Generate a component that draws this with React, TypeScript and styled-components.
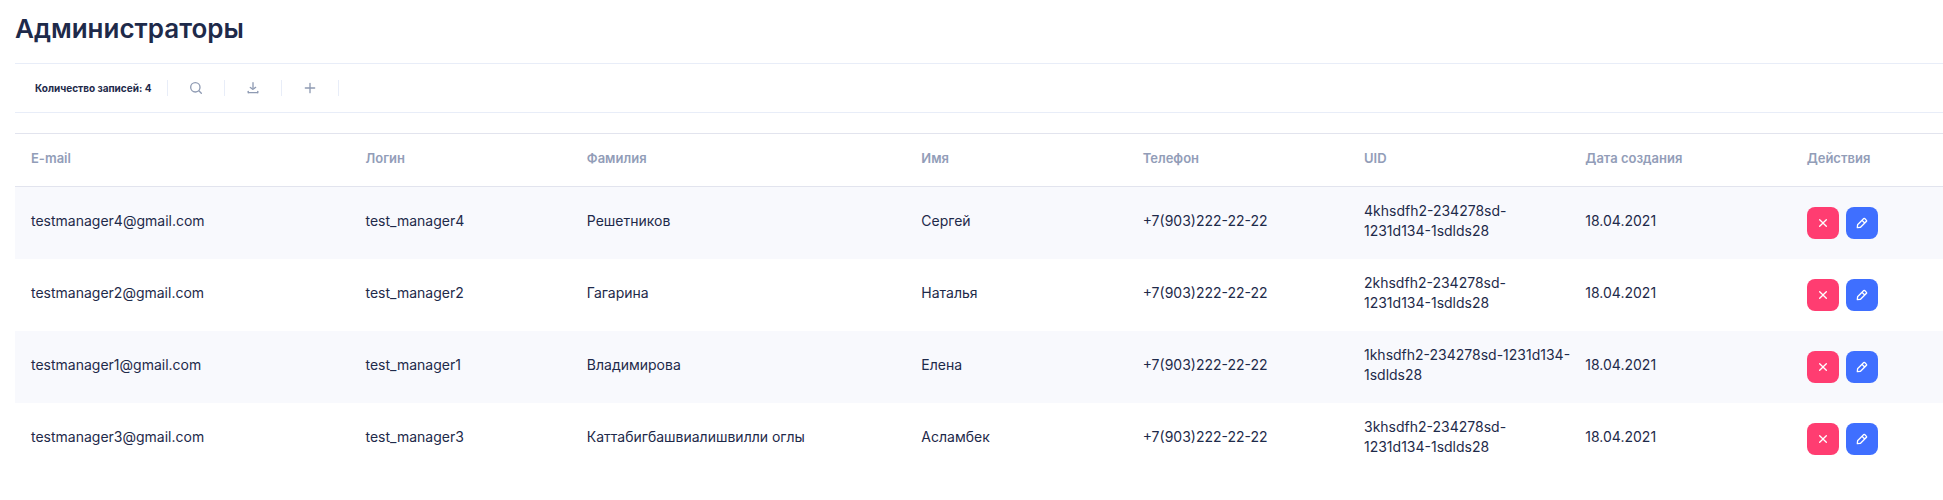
import React from "react";
import styled, { createGlobalStyle } from "styled-components";

const GlobalStyle = createGlobalStyle`
  * { box-sizing: border-box; }
  body {
    margin: 0;
    background: #ffffff;
    color: #1e2a4a;
    font-family: Inter, "Liberation Sans", sans-serif;
    font-size: 14px;
    line-height: 20px;
  }
`;

const Page = styled.main`
  padding: 12px 0 24px 15px;
`;

const Title = styled.h1`
  margin: 0;
  padding-bottom: 17px;
  font-size: 26px;
  line-height: 34px;
  font-weight: 600;
`;

const Toolbar = styled.div`
  display: flex;
  align-items: center;
  height: 50px;
  margin-bottom: 20px;
  padding-left: 20px;
  border-top: 1px solid #e8edf8;
  border-bottom: 1px solid #e8edf8;
`;

const Count = styled.span`
  width: 132px;
  font-size: 10px;
  line-height: 16px;
  font-weight: 700;
  white-space: nowrap;
`;

const ToolButton = styled.button`
  display: flex;
  align-items: center;
  justify-content: center;
  width: 57px;
  height: 16px;
  padding: 0;
  border: 0;
  border-right: 1px solid #e8edf8;
  background: none;
  color: #8f9bb3;
  cursor: pointer;

  &:first-of-type {
    width: 58px;
    border-left: 1px solid #e8edf8;
  }
`;

const Table = styled.table`
  width: 100%;
  table-layout: fixed;
  border-collapse: separate;
  border-spacing: 0;
  border-top: 1px solid #e2e4ee;
`;

const Column = styled.col<{ $share?: string }>`
  width: ${({ $share }) => $share ?? "auto"};
`;

const HeadCell = styled.th`
  padding: 14px 16px 18px;
  border-bottom: 1px solid #e2e4ee;
  color: #929db8;
  font-size: 13px;
  font-weight: 600;
  text-align: left;
`;

const Row = styled.tr`
  height: 72px;

  &:nth-child(odd) {
    background: #f8f9fd;
  }
`;

const Cell = styled.td`
  padding: 14px 16px 18px;
  vertical-align: middle;
`;

const UidCell = styled(Cell)`
  padding-right: 0;
`;

const UidPart = styled.span`
  white-space: nowrap;
`;

const ActionCell = styled(Cell)`
  padding: 20px 16px;
`;

const Actions = styled.div`
  display: flex;
  gap: 7px;
`;

const ActionButton = styled.button<{ $tone: "danger" | "primary" }>`
  display: flex;
  align-items: center;
  justify-content: center;
  width: 32px;
  height: 32px;
  padding: 0;
  border: 0;
  border-radius: 8px;
  background: ${({ $tone }) => ($tone === "danger" ? "#ff3d71" : "#3f6fff")};
  color: #ffffff;
  cursor: pointer;
`;

const Icon = styled.svg.attrs({ viewBox: "0 0 24 24", "aria-hidden": true })`
  display: block;
  width: 16px;
  height: 16px;
  fill: currentColor;
`;

const SearchIcon = () => (
  <Icon>
    <path d="M20.71 19.29l-3.4-3.39A7.92 7.92 0 0 0 19 11a8 8 0 1 0-8 8 7.92 7.92 0 0 0 4.9-1.69l3.39 3.4a1 1 0 0 0 1.42 0 1 1 0 0 0 0-1.42zM5 11a6 6 0 1 1 6 6 6 6 0 0 1-6-6z" />
  </Icon>
);

const DownloadIcon = () => (
  <Icon>
    <rect x="4" y="18" width="16" height="2" rx="1" />
    <rect x="4" y="16" width="2" height="4" rx="1" />
    <rect x="18" y="16" width="2" height="4" rx="1" />
    <path d="M12 15a1 1 0 0 1-.58-.18l-4-2.82a1 1 0 0 1-.24-1.39 1 1 0 0 1 1.4-.24L12 12.76l3.4-2.56a1 1 0 0 1 1.2 1.6l-4 3a1 1 0 0 1-.6.2z" />
    <path d="M12 13a1 1 0 0 1-1-1V4a1 1 0 0 1 2 0v8a1 1 0 0 1-1 1z" />
  </Icon>
);

const PlusIcon = () => (
  <Icon>
    <path d="M19 11h-6V5a1 1 0 0 0-2 0v6H5a1 1 0 0 0 0 2h6v6a1 1 0 0 0 2 0v-6h6a1 1 0 0 0 0-2z" />
  </Icon>
);

const CrossIcon = () => (
  <Icon>
    <path d="M13.41 12l4.3-4.29a1 1 0 1 0-1.42-1.42L12 10.59l-4.29-4.3a1 1 0 0 0-1.42 1.42l4.3 4.29-4.3 4.29a1 1 0 0 0 0 1.42 1 1 0 0 0 1.42 0l4.29-4.3 4.29 4.3a1 1 0 0 0 1.42 0 1 1 0 0 0 0-1.42z" />
  </Icon>
);

const PencilIcon = () => (
  <Icon>
    <path d="M19.4 7.34L16.66 4.6A2 2 0 0 0 14 4.53l-9 9a2 2 0 0 0-.57 1.21L4 18.91a1 1 0 0 0 .29.8A1 1 0 0 0 5 20h.09l4.17-.38a2 2 0 0 0 1.21-.57l9-9a1.92 1.92 0 0 0-.07-2.71zM9.08 17.62l-3 .28.27-3L12 9.32l2.7 2.7zM16 10.68L13.32 8l1.95-2L18 8.73z" />
  </Icon>
);

const columns: { label: string; share?: string }[] = [
  { label: "E-mail", share: "17.35%" },
  { label: "Логин", share: "11.48%" },
  { label: "Фамилия", share: "17.35%" },
  { label: "Имя", share: "11.48%" },
  { label: "Телефон", share: "11.48%" },
  { label: "UID", share: "11.48%" },
  { label: "Дата создания", share: "11.48%" },
  { label: "Действия" },
];

const admins = [
  { id: 4, surname: "Решетников", name: "Сергей", uid: ["4khsdfh2-234278sd-", "1231d134-1sdlds28"] },
  { id: 2, surname: "Гагарина", name: "Наталья", uid: ["2khsdfh2-234278sd-", "1231d134-1sdlds28"] },
  { id: 1, surname: "Владимирова", name: "Елена", uid: ["1khsdfh2-234278sd-1231d134-", "1sdlds28"] },
  { id: 3, surname: "Каттабигбашвиалишвилли оглы", name: "Асламбек", uid: ["3khsdfh2-234278sd-", "1231d134-1sdlds28"] },
];

export default function App() {
  return (
    <>
      <GlobalStyle />
      <Page>
        <Title>Администраторы</Title>
        <Toolbar>
          <Count>Количество записей: {admins.length}</Count>
          <ToolButton type="button" aria-label="Поиск"><SearchIcon /></ToolButton>
          <ToolButton type="button" aria-label="Скачать"><DownloadIcon /></ToolButton>
          <ToolButton type="button" aria-label="Добавить"><PlusIcon /></ToolButton>
        </Toolbar>
        <Table>
          <colgroup>
            {columns.map((c) => <Column key={c.label} $share={c.share} />)}
          </colgroup>
          <thead>
            <tr>
              {columns.map((c) => <HeadCell key={c.label} scope="col">{c.label}</HeadCell>)}
            </tr>
          </thead>
          <tbody>
            {admins.map((a) => (
              <Row key={a.id}>
                <Cell>{`testmanager${a.id}@gmail.com`}</Cell>
                <Cell>{`test_manager${a.id}`}</Cell>
                <Cell>{a.surname}</Cell>
                <Cell>{a.name}</Cell>
                <Cell>+7(903)222-22-22</Cell>
                <UidCell>
                  <UidPart>{a.uid[0]}</UidPart>
                  <wbr />
                  <UidPart>{a.uid[1]}</UidPart>
                </UidCell>
                <Cell>18.04.2021</Cell>
                <ActionCell>
                  <Actions>
                    <ActionButton type="button" $tone="danger" aria-label="Удалить"><CrossIcon /></ActionButton>
                    <ActionButton type="button" $tone="primary" aria-label="Редактировать"><PencilIcon /></ActionButton>
                  </Actions>
                </ActionCell>
              </Row>
            ))}
          </tbody>
        </Table>
      </Page>
    </>
  );
}
